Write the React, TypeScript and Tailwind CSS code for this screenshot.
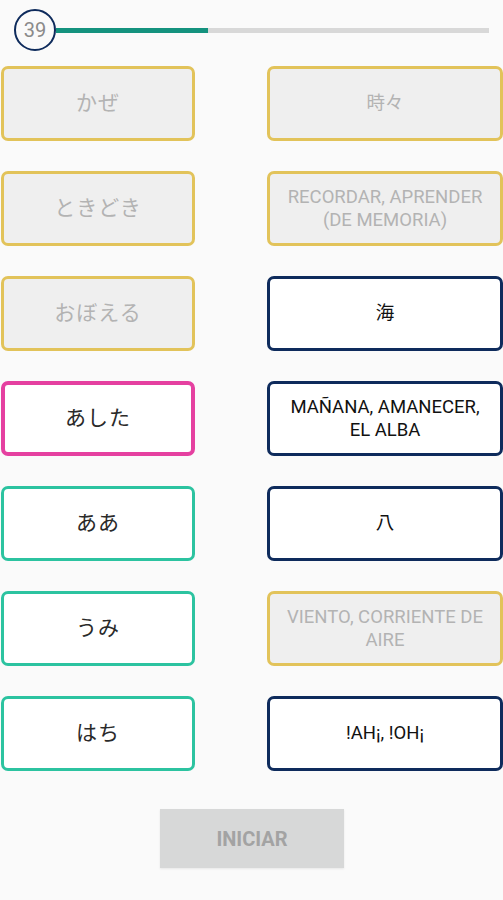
const rows: { l: string; ls: string; r: string; rs: string }[] = [
  { l: "かぜ", ls: "done", r: "時々", rs: "done" },
  { l: "ときどき", ls: "done", r: "RECORDAR, APRENDER (DE MEMORIA)", rs: "done" },
  { l: "おぼえる", ls: "done", r: "海", rs: "open" },
  { l: "あした", ls: "active", r: "MAÑANA, AMANECER, EL ALBA", rs: "open" },
  { l: "ああ", ls: "left", r: "八", rs: "open" },
  { l: "うみ", ls: "left", r: "VIENTO, CORRIENTE DE AIRE", rs: "done" },
  { l: "はち", ls: "left", r: "!AH¡, !OH¡", rs: "open" },
];

const styles: Record<string, string> = {
  done: "border-[#e2c35a] bg-[#efefef] text-[#b3b3b3]",
  open: "border-[#0e2b5c] bg-white text-[#111111]",
  active: "border-[#e540a0] border-[4px] bg-white text-[#2a2a2a]",
  left: "border-[#2cc3a0] bg-white text-[#2a2a2a]",
};

function Card({ text, state, jp }: { text: string; state: string; jp?: boolean }) {
  return (
    <div
      className={`flex h-[75px] items-center justify-center rounded-[7px] border-[3px] px-2 text-center leading-[23px] ${styles[state]} ${
        jp ? "text-[21px] tracking-[1px]" : "text-[18.5px]"
      }`}
    >
      {text}
    </div>
  );
}

export default function App() {
  return (
    <div
      className="min-h-[900px] w-[503px] bg-[#fafafa]"
      style={{ fontFamily: "Roboto, 'Noto Sans CJK JP', sans-serif" }}
    >
      <div className="flex items-center pl-[14px] pr-[14px] pt-[9px]">
        <div className="z-10 flex h-[42px] w-[42px] shrink-0 items-center justify-center rounded-full border-[2px] border-[#0e2b5c] bg-[#fafafa] text-[20px] text-[#8a8a8a]">
          39
        </div>
        <div className="flex h-[5px] flex-1 bg-[#d8d8d8]">
          <div className="h-full w-[152px] bg-[#14927e]" />
        </div>
      </div>
      <div className="mt-[15px] grid grid-cols-[194px_236px] gap-x-[72px] gap-y-[30px] pl-[1px]">
        {rows.map((row, i) => (
          <div key={i} className="contents">
            <Card text={row.l} state={row.ls} jp />
            <Card text={row.r} state={row.rs} />
          </div>
        ))}
      </div>
      <div className="mt-[38px] flex justify-center">
        <button className="ml-[1px] h-[59px] w-[184px] bg-[#d7d8d8] text-[20px] font-bold text-[#a3a3a3] shadow-[0_1px_2px_rgba(0,0,0,0.08)]">
          INICIAR
        </button>
      </div>
    </div>
  );
}
